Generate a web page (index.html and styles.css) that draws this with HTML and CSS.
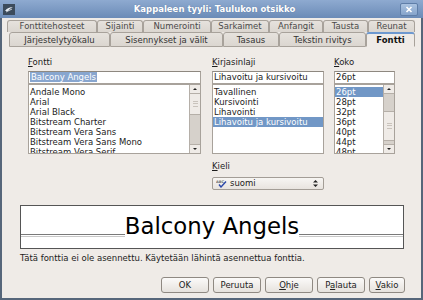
FILE: index.html
```html
<!DOCTYPE html>
<html>
<head>
<meta charset="utf-8">
<link rel="stylesheet" href="styles.css">
</head>
<body>
<div class="window">
  <div class="titlebar">
    <div class="appicon">
      <svg width="12" height="11" viewBox="0 0 12 11"><rect x="0" y="0" width="12" height="11" fill="#3c4b5c"/><path d="M2 7 C4 4 7 3 10 3 C8 4 6 5 5 7 Z" fill="#e8eef5"/><path d="M3 8 L9 5" stroke="#e8eef5" stroke-width="0.8"/></svg>
    </div>
    <div class="title">Kappaleen tyyli: Taulukon otsikko</div>
    <div class="close">
      <svg width="16" height="11" viewBox="0 0 16 11"><path d="M5.5 3 L10.5 8 M10.5 3 L5.5 8" stroke="#fff" stroke-width="1.6"/></svg>
    </div>
  </div>

  <div class="tabs">
    <div class="tabrow back">
      <div class="tab">Fonttitehosteet</div>
      <div class="tab">Sijainti</div>
      <div class="tab">Numerointi</div>
      <div class="tab">Sarkaimet</div>
      <div class="tab">Anfangit</div>
      <div class="tab">Tausta</div>
      <div class="tab">Reunat</div>
    </div>
    <div class="tabrow front">
      <div class="tab">Järjestelytyökalu</div>
      <div class="tab">Sisennykset ja välit</div>
      <div class="tab">Tasaus</div>
      <div class="tab">Tekstin rivitys</div>
      <div class="tab active">Fontti</div>
    </div>
  </div>

  <div class="page">
    <div class="fields">
      <div class="col col-font">
        <div class="label"><u>F</u>ontti</div>
        <div class="entry"><span class="selected-text">Balcony Angels</span></div>
        <div class="list">
          <div class="items">
            <div class="item">Andale Mono</div>
            <div class="item">Arial</div>
            <div class="item">Arial Black</div>
            <div class="item">Bitstream Charter</div>
            <div class="item">Bitstream Vera Sans</div>
            <div class="item">Bitstream Vera Sans Mono</div>
            <div class="item">Bitstream Vera Serif</div>
          </div>
          <div class="scrollbar sb-font">
            <div class="sb-btn up"></div>
            <div class="sb-thumb"><span class="grip"></span></div>
            <div class="sb-trough"></div>
            <div class="sb-btn down"></div>
          </div>
        </div>
      </div>
      <div class="col col-style">
        <div class="label"><u>K</u>irjasinlaji</div>
        <div class="entry">Lihavoitu ja kursivoitu</div>
        <div class="list">
          <div class="items">
            <div class="item">Tavallinen</div>
            <div class="item">Kursivointi</div>
            <div class="item">Lihavointi</div>
            <div class="item sel">Lihavoitu ja kursivoitu</div>
          </div>
        </div>
        <div class="label lang-label"><u>K</u>ieli</div>
        <div class="combo">
          <svg class="spell" width="11" height="9" viewBox="0 0 11 9"><text x="0" y="3.6" font-size="3.6" font-family="DejaVu Sans" font-weight="bold" fill="#6a6a6a">ABC</text><path d="M3 5.5 L5 8 L10 2.5" stroke="#2a47a8" stroke-width="1.4" fill="none"/></svg>
          <span class="combo-text">suomi</span>
          <svg class="updown" width="7" height="9" viewBox="0 0 7 9"><path d="M1 3.5 L3.5 1 L6 3.5 Z M1 5.5 L3.5 8 L6 5.5 Z" fill="#222"/></svg>
        </div>
      </div>
      <div class="col col-size">
        <div class="label"><u>K</u>oko</div>
        <div class="entry">26pt</div>
        <div class="list">
          <div class="items">
            <div class="item sel">26pt</div>
            <div class="item">28pt</div>
            <div class="item">32pt</div>
            <div class="item">36pt</div>
            <div class="item">40pt</div>
            <div class="item">44pt</div>
            <div class="item">48pt</div>
          </div>
          <div class="scrollbar sb-size">
            <div class="sb-btn up"></div>
            <div class="sb-trough"></div>
            <div class="sb-thumb"><span class="grip"></span></div>
            <div class="sb-trough small"></div>
            <div class="sb-btn down"></div>
          </div>
        </div>
      </div>
    </div>

    <div class="preview">
      <div class="baseline"></div>
      <div class="sample">Balcony Angels</div>
      <div class="baseline"></div>
    </div>
    <div class="note">Tätä fonttia ei ole asennettu. Käytetään lähintä asennettua fonttia.</div>
  </div>

  <div class="buttons">
    <div class="btn">OK</div>
    <div class="btn">Peruuta</div>
    <div class="btn"><u>O</u>hje</div>
    <div class="btn">P<u>a</u>lauta</div>
    <div class="btn btn-small"><u>V</u>akio</div>
  </div>
</div>
</body>
</html>
```

FILE: styles.css
```css
html, body {
  margin: 0;
  padding: 0;
}
body {
  width: 423px;
  height: 300px;
  overflow: hidden;
  font-family: "DejaVu Sans", sans-serif;
  font-size: 8.5px;
  color: #1c1c1c;
  background: #efebe7;
}
u { text-decoration: underline; text-underline-offset: 1px; }

.window {
  box-sizing: border-box;
  width: 423px;
  height: 300px;
  background: #efebe7;
  border-left: 2px solid #56667a;
  border-right: 2px solid #56667a;
  border-bottom: 2px solid #56667a;
  display: flex;
  flex-direction: column;
}

.titlebar {
  height: 18px;
  margin: 0 -2px;
  background: linear-gradient(#8eaad0, #6b8bb7);
  display: flex;
  align-items: center;
  padding: 0 5px 0 3px;
  color: #fff;
  font-weight: bold;
  font-size: 8.5px;
  flex-shrink: 0;
}
.appicon { width: 12px; height: 11px; display: flex; }
.title { flex: 1; text-align: center; padding-left: 14px; text-shadow: 0 0 1px rgba(40,60,90,0.4); }
.close {
  width: 16px;
  height: 11px;
  background: linear-gradient(#aac2e0, #86a4cb);
  border: 1px solid #5f7ea8;
  border-radius: 2px;
  display: flex;
}

.tabs {
  padding: 2px 6px 0 5px;
  flex-shrink: 0;
}
.tabrow {
  display: grid;
}
.tabrow.back {
  grid-template-columns: 90px 46px 68px 58px 54px 45px 47px;
  height: 12px;
}
.tabrow.front {
  margin-left: 2px;
  grid-template-columns: 101px 113px 56px 87px 49px;
  height: 15px;
  position: relative;
  z-index: 1;
}
.tab {
  box-sizing: border-box;
  border: 1px solid #a8a29b;
  border-bottom: none;
  border-radius: 3px 3px 0 0;
  background: linear-gradient(#e6e2dd, #dbd6d0);
  color: #4a4a4a;
  text-align: center;
  line-height: 11px;
  white-space: nowrap;
  overflow: hidden;
}
.front .tab {
  line-height: 14px;
  color: #333;
  border-bottom: 1px solid #a8a29b;
}
.front .tab.active {
  background: #efebe7;
  border-top: 2px solid #6d98cf;
  border-bottom: 1px solid #efebe7;
  font-weight: bold;
  color: #111;
  line-height: 12px;
}

.page {
  flex: 1;
  padding: 10px 0 0 16px;
}
.fields {
  display: flex;
  padding-left: 10px;
  gap: 11px;
}
.col { display: flex; flex-direction: column; }
.col-font { width: 173px; }
.col-style { width: 112px; margin-right: -1px; }
.col-size { width: 61px; }
.label {
  height: 10px;
  line-height: 10px;
  margin-bottom: 4px;
}
.entry {
  box-sizing: border-box;
  height: 13px;
  line-height: 11px;
  background: #fff;
  border: 1px solid #a8a29b;
  border-top-color: #8e8880;
  padding-left: 1px;
  white-space: nowrap;
  overflow: hidden;
}
.selected-text {
  background: #88a6cf;
  color: #fff;
  padding: 0 1px;
}
.list {
  box-sizing: border-box;
  height: 70px;
  background: #fff;
  border: 1px solid #a8a29b;
  display: flex;
  overflow: hidden;
}
.items {
  flex: 1;
  padding-top: 2px;
  overflow: hidden;
}
.item {
  height: 10px;
  line-height: 10px;
  padding-left: 1px;
  white-space: nowrap;
}
.item.sel {
  background: #7197c6;
  color: #fff;
}
.scrollbar {
  width: 10px;
  display: flex;
  flex-direction: column;
  background: #d6d1cb;
  border-left: 1px solid #b5afa8;
}
.sb-btn {
  height: 8px;
  background: #efebe7;
  border-bottom: 1px solid #b5afa8;
  position: relative;
}
.sb-btn.down { border-bottom: none; border-top: 1px solid #b5afa8; margin-top: auto; }
.sb-btn::after {
  content: "";
  position: absolute;
  left: 3px;
  top: 3px;
  border-left: 2px solid transparent;
  border-right: 2px solid transparent;
}
.sb-btn.up::after { border-bottom: 2px solid #222; }
.sb-btn.down::after { border-top: 2px solid #222; }
.sb-thumb {
  background: #efebe7;
  border-bottom: 1px solid #b5afa8;
  display: flex;
  align-items: center;
  justify-content: center;
}
.sb-size .sb-thumb { border-top: 1px solid #b5afa8; }
.sb-font .sb-thumb { height: 20px; }
.sb-size .sb-thumb { height: 29px; }
.sb-trough { flex: 1; }
.sb-size .sb-trough { flex: none; height: 17px; }
.sb-size .sb-trough.small { height: 3px; }
.grip {
  width: 5px;
  height: 4px;
  border-top: 1px solid #c9c3bc;
  border-bottom: 1px solid #c9c3bc;
  position: relative;
}
.grip::after {
  content: "";
  position: absolute;
  left: 0; right: 0; top: 1px;
  border-top: 1px solid #c9c3bc;
}

.lang-label { margin-top: 7px; margin-bottom: 6px; }
.combo {
  box-sizing: border-box;
  height: 13px;
  border: 1px solid #a39d96;
  border-radius: 2px;
  background: linear-gradient(#f7f5f3, #e8e4df);
  display: flex;
  align-items: center;
  padding: 0 4px 0 3px;
}
.spell { margin-right: 3px; }
.combo-text { flex: 1; line-height: 11px; }
.updown { margin-left: 2px; }

.preview {
  box-sizing: border-box;
  margin: 15px 17px 0 2px;
  height: 44px;
  background: #fff;
  border: 1px solid #555;
  display: flex;
  align-items: flex-end;
}
.baseline {
  flex: 1;
  height: 1px;
  border-top: 1px solid #7a7a7a;
  border-bottom: 1px solid #c8c8c8;
  margin-bottom: 11px;
}
.sample {
  font-size: 22.8px;
  line-height: 23px;
  padding-bottom: 10px;
  color: #000;
  white-space: nowrap;
}
.note {
  margin: 4px 0 0 2px;
  line-height: 10px;
}

.buttons {
  display: flex;
  justify-content: flex-end;
  gap: 4px;
  padding: 0 16px 5px 0;
}
.btn {
  box-sizing: border-box;
  width: 48px;
  height: 16px;
  border: 1px solid #8f8982;
  border-radius: 3px;
  background: linear-gradient(#fbfaf9, #e6e2dd);
  text-align: center;
  line-height: 14px;
  color: #222;
}
.btn-small { width: 36px; }
```
